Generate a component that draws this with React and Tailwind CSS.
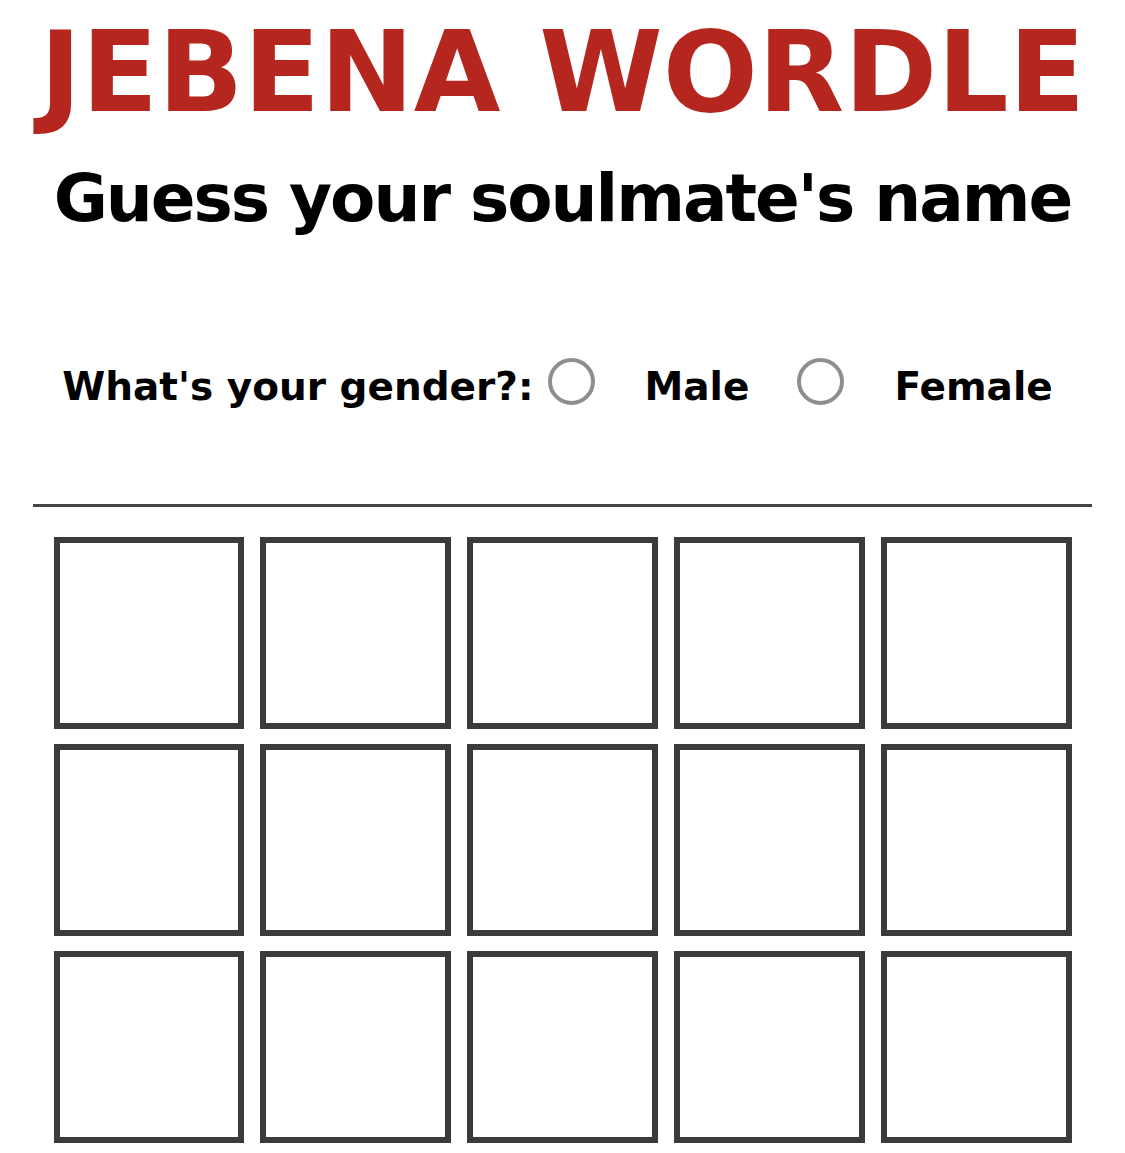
const Radio = () => (
  <span className="block w-[47px] h-[47px] mb-[10px] rounded-full border-4 border-[#8e8e8e] bg-white shrink-0" />
)

const App = () => {
  const rows = [0, 1, 2]
  const cols = [0, 1, 2, 3, 4]

  return (
    <div
      className="w-[1125px] min-h-[1153px] bg-white text-black font-bold"
      style={{ fontFamily: '"DejaVu Sans", Verdana, sans-serif' }}
    >
      <h1 className="text-center text-[112px] leading-none text-[#b5261f] pt-[16px]">
        JEBENA WORDLE
      </h1>
      <h2 className="text-center text-[66px] leading-none tracking-[-2px] whitespace-nowrap mt-[38px]">
        Guess your soulmate's name
      </h2>

      <div className="flex items-center justify-center pr-[10px] mt-[126px] text-[39px] leading-none">
        <span>What's your gender?:</span>
        <span className="ml-[15px]"><Radio /></span>
        <span className="ml-[49px]">Male</span>
        <span className="ml-[48px]"><Radio /></span>
        <span className="ml-[50px]">Female</span>
      </div>

      <div className="mx-[33px] mt-[89px] h-[3px] bg-[#454545]" />

      <div className="w-[1018px] mx-auto mt-[30px] grid grid-cols-5 gap-x-4 gap-y-[15px]">
        {rows.map((r) =>
          cols.map((c) => (
            <div
              key={`${r}-${c}`}
              className="h-[192px] border-[6px] border-[#3b3b3b] bg-white"
            />
          ))
        )}
      </div>
    </div>
  )
}

export default App
